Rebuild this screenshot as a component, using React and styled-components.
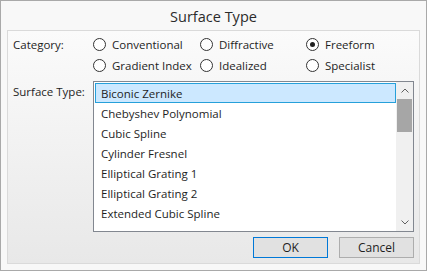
import React, { useState } from 'react'
import styled, { createGlobalStyle } from 'styled-components'

const Global = createGlobalStyle`
    html, body {
        margin: 0;
        padding: 0;
        background: #ffffff;
    }
    body {
        font-family: "Open Sans", "Noto Sans", sans-serif;
        font-size: 11.5px;
        color: #1e1e1e;
    }
`

const categories = [
    'Conventional', 'Diffractive', 'Freeform',
    'Gradient Index', 'Idealized', 'Specialist',
]

const surfaces = [
    'Biconic Zernike',
    'Chebyshev Polynomial',
    'Cubic Spline',
    'Cylinder Fresnel',
    'Elliptical Grating 1',
    'Elliptical Grating 2',
    'Extended Cubic Spline',
]

export default function App() {
    const [category, setCategory] = useState('Freeform')
    const [selected, setSelected] = useState(0)

    return <>
        <Global />
        <Window>
            <Title>Surface Type</Title>
            <Panel>
                <FieldRow>
                    <Label>Category:</Label>
                    <RadioGrid>
                        {categories.map(c =>
                            <Radio key={c} onClick={() => setCategory(c)}>
                                <Circle checked={category === c} />
                                {c}
                            </Radio>
                        )}
                    </RadioGrid>
                </FieldRow>
                <ListRow>
                    <Label>Surface Type:</Label>
                    <ListBox>
                        <Items>
                            {surfaces.map((s, i) =>
                                <Item key={s} selected={selected === i} onClick={() => setSelected(i)}>{s}</Item>
                            )}
                        </Items>
                        <ScrollBar>
                            <Arrow>
                                <svg width="8" height="5" viewBox="0 0 8 5">
                                    <path d="M0.5 4.5 L4 1 L7.5 4.5" fill="none" stroke="#606060" strokeWidth="1" />
                                </svg>
                            </Arrow>
                            <Track>
                                <Thumb />
                            </Track>
                            <Arrow>
                                <svg width="8" height="5" viewBox="0 0 8 5">
                                    <path d="M0.5 0.5 L4 4 L7.5 0.5" fill="none" stroke="#606060" strokeWidth="1" />
                                </svg>
                            </Arrow>
                        </ScrollBar>
                    </ListBox>
                </ListRow>
                <Buttons>
                    <Button primary>OK</Button>
                    <Button>Cancel</Button>
                </Buttons>
            </Panel>
        </Window>
    </>
}

const Window = styled.div`
    box-sizing: border-box;
    width: 427px;
    height: 271px;
    border: 1px solid #a9a9a9;
    background: #f8f8f8;
    display: flex;
    flex-direction: column;
`

const Title = styled.div`
    height: 29px;
    display: flex;
    align-items: center;
    justify-content: center;
    font-size: 14.5px;
    color: #2b2b2b;
    padding-top: 1px;
`

const Panel = styled.div`
    flex: 1;
    margin: 0 6px 6px;
    border: 1px solid #dadada;
    background: linear-gradient(#fbfbfb, #e8e8e8);
    display: flex;
    flex-direction: column;
    padding: 3px 5px 5px 5px;
`

const FieldRow = styled.div`
    display: flex;
`

const Label = styled.div`
    width: 80px;
    flex: none;
    line-height: 21px;
`

const RadioGrid = styled.div`
    display: grid;
    grid-template-columns: 107px 106px 100px;
    grid-auto-rows: 21px;
`

const Radio = styled.div`
    display: flex;
    align-items: center;
    gap: 6px;
    cursor: default;
    white-space: nowrap;
`

const Circle = styled.span`
    box-sizing: border-box;
    width: 13px;
    height: 13px;
    border-radius: 50%;
    border: 1px solid #333333;
    background: #ffffff;
    display: flex;
    align-items: center;
    justify-content: center;

    &::after {
        content: '';
        display: ${props => props.checked ? 'block' : 'none'};
        width: 5px;
        height: 5px;
        border-radius: 50%;
        background: #1e1e1e;
    }
`

const ListRow = styled.div`
    display: flex;
    margin-top: 5px;
`

const ListBox = styled.div`
    box-sizing: border-box;
    width: 321px;
    height: 151px;
    border: 1px solid #828790;
    background: #ffffff;
    display: flex;
    padding: 1px 0 1px 1px;
`

const Items = styled.div`
    flex: 1;
    overflow: hidden;
`

const Item = styled.div`
    box-sizing: border-box;
    height: 20px;
    line-height: 18px;
    padding: 1px 5px 0;
    border: 1px solid ${props => props.selected ? '#26a0da' : 'transparent'};
    background: ${props => props.selected ? '#cce8ff' : 'transparent'};
    white-space: nowrap;
`

const ScrollBar = styled.div`
    width: 17px;
    background: #f0f0f0;
    display: flex;
    flex-direction: column;
    margin-top: -1px;
    margin-bottom: -1px;
`

const Arrow = styled.div`
    height: 17px;
    display: flex;
    align-items: center;
    justify-content: center;
`

const Track = styled.div`
    flex: 1;
    padding: 0 1px;
`

const Thumb = styled.div`
    height: 33px;
    background: #a6a6a6;
`

const Buttons = styled.div`
    display: flex;
    justify-content: flex-end;
    gap: 11px;
    margin-top: 5px;
`

const Button = styled.button`
    box-sizing: border-box;
    width: 75px;
    height: 21px;
    padding: 0;
    font-family: inherit;
    font-size: 12px;
    color: #1e1e1e;
    background: #e1e1e1;
    border: 1px solid ${props => props.primary ? '#0078d7' : '#adadad'};
    box-shadow: ${props => props.primary ? 'inset 0 0 0 1px #e1e1e1' : 'none'};
`
